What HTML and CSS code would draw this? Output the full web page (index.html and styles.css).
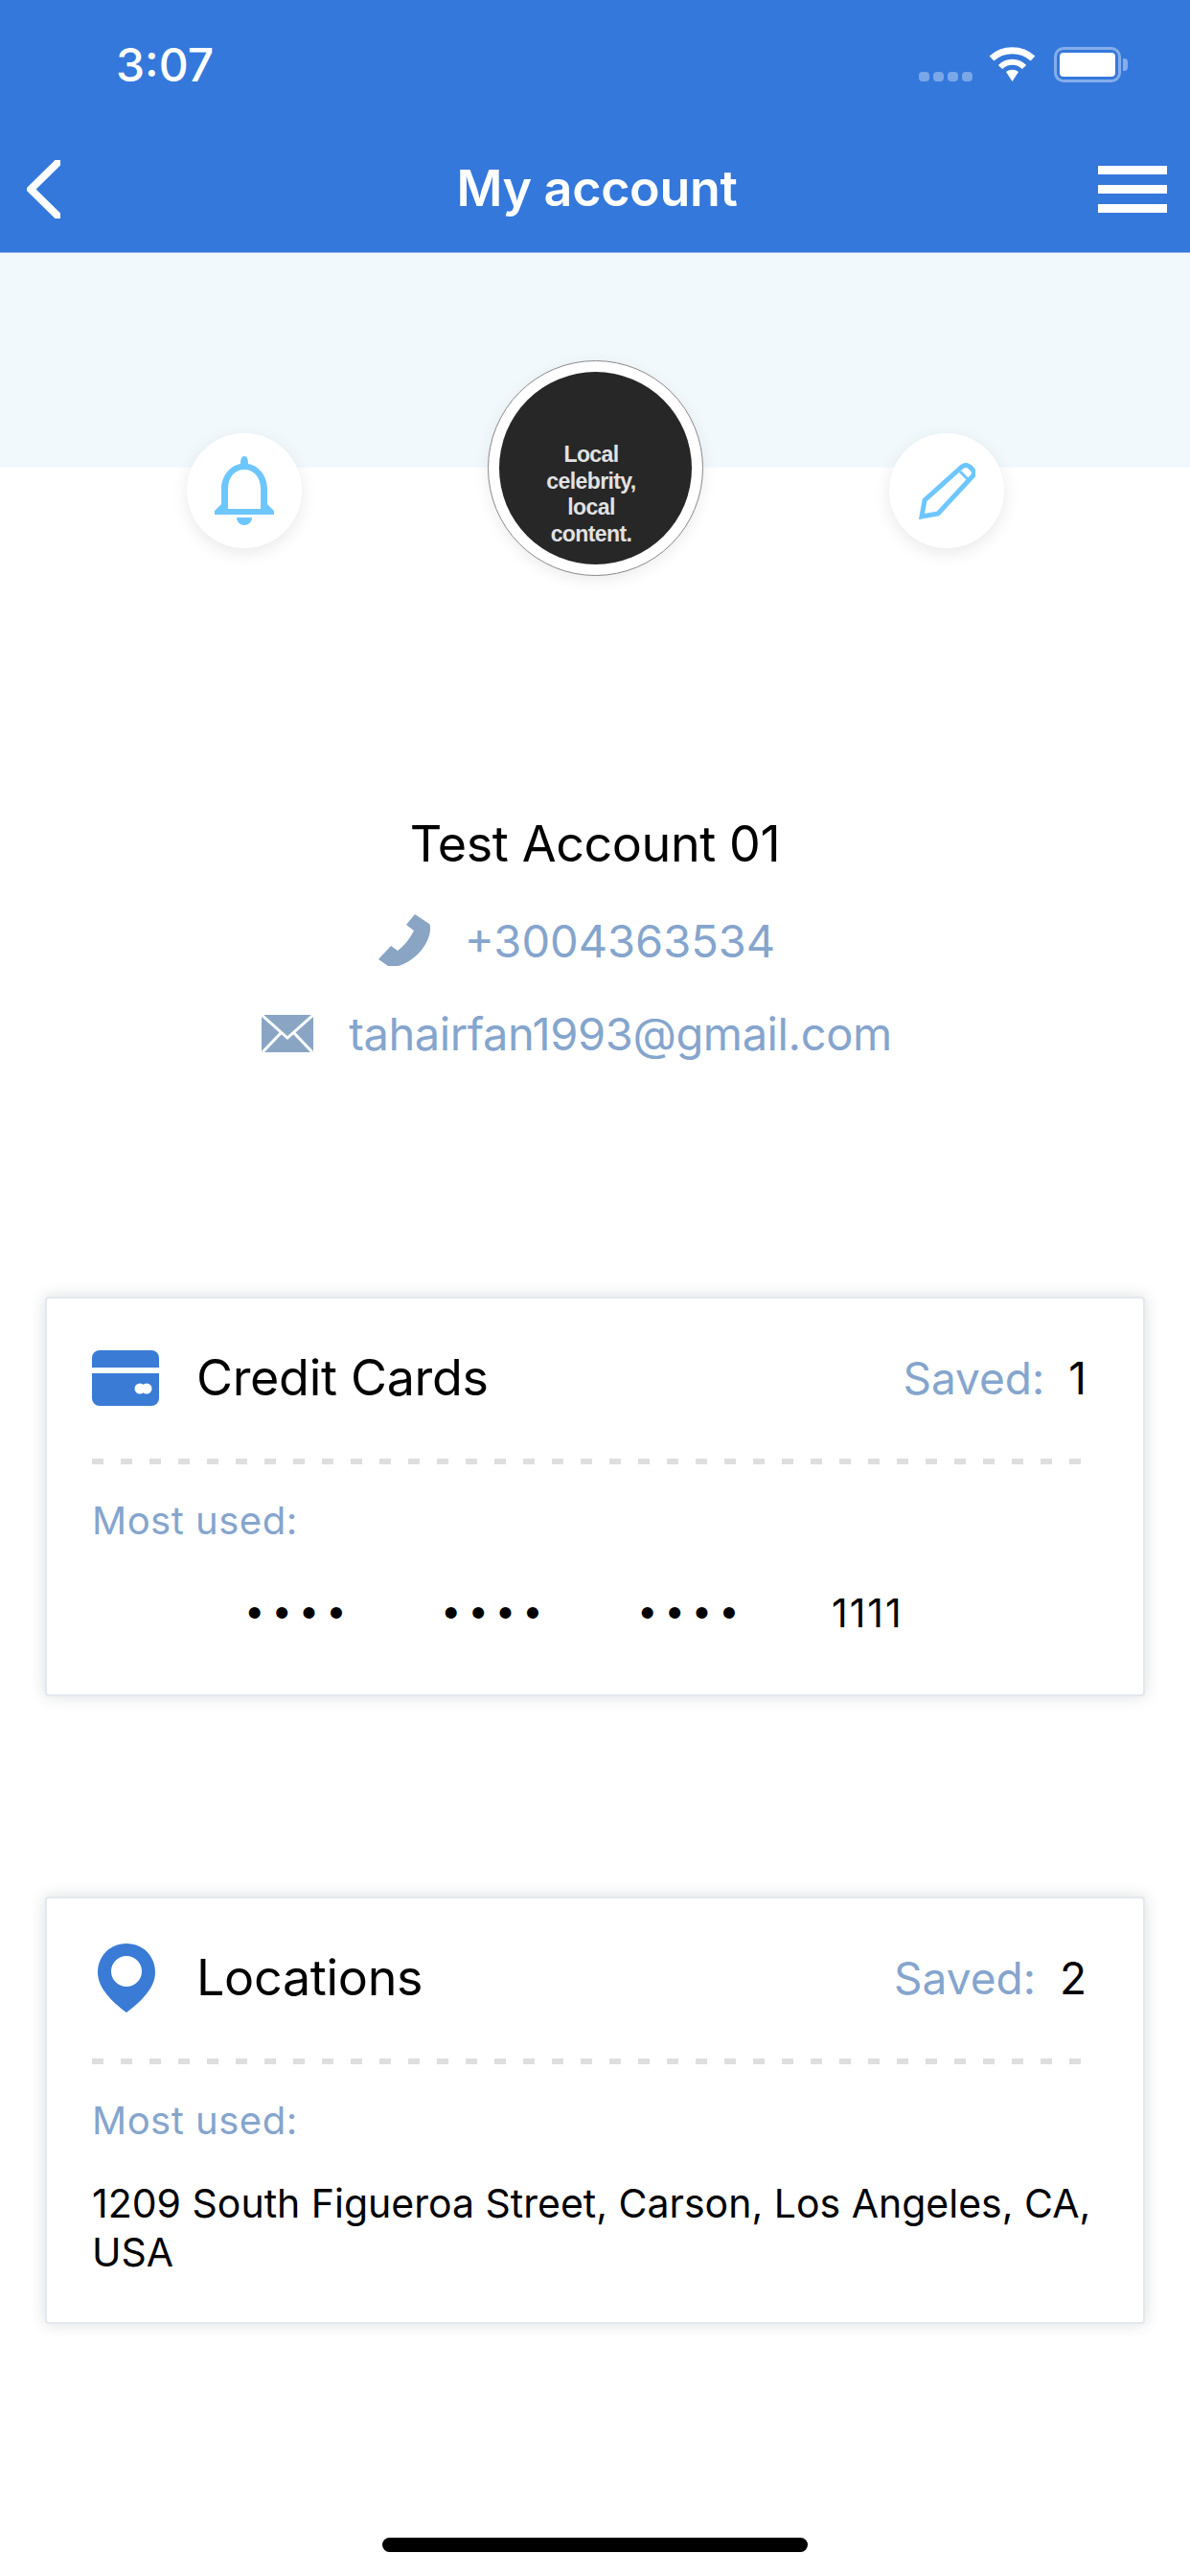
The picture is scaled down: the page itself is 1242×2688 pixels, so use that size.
FILE: index.html
```html
<!DOCTYPE html>
<html lang="en">
    <head>
        <meta charset="UTF-8" />
        <meta name="viewport" content="width=device-width, initial-scale=1.0" />
        <title>My account</title>
        <link rel="stylesheet" href="styles.css">
    </head>
    <body>
        <main class="screen">
            <header class="topbar">
                <div class="status">
                    <span class="status-time">3:07</span>
                    <div class="status-icons">
                        <div class="signal"><i></i><i></i><i></i><i></i></div>
                        <svg class="wifi" viewBox="0 0 49 36">
                            <path d="M3 12 C15 1 34 1 46 12" fill="none" stroke="#fff" stroke-width="7" />
                            <path d="M12 21 C19 14 30 14 37 21" fill="none" stroke="#fff" stroke-width="6" />
                            <path d="M18 26 C22 23 27 23 31 26 L24.500 36 Z" fill="#fff" />
                        </svg>
                        <div class="battery"><i></i></div>
                    </div>
                </div>
                <nav class="nav">
                    <svg class="nav-back" viewBox="0 0 35 61">
                        <path d="M32 3 L4 30.500 L32 58" fill="none" stroke="#fff" stroke-width="8" stroke-linecap="round" stroke-linejoin="round" />
                    </svg>
                    <h1 class="nav-title">My account</h1>
                    <div class="nav-menu"><i></i><i></i><i></i></div>
                </nav>
            </header>

            <div class="band"></div>

            <section class="actions">
                <button class="round-btn">
                    <svg class="icon-bell" viewBox="0 0 62 72">
                        <path fill-rule="evenodd" d="M31 0 C34 0 35 3 35 8 C47 10 55 22 55 34 V50 L62 57 V61 H0 V57 L7 50 V34 C7 22 15 10 27 8 C27 3 28 0 31 0 Z M14 55 H48 V34 C48 22 41 14 31 14 C21 14 14 22 14 34 Z" />
                        <path d="M23 64 H39 C39 69 35 72 31 72 C27 72 23 69 23 64 Z" />
                    </svg>
                </button>
                <div class="avatar">
                    <div class="avatar-img">Local<br>celebrity,<br>local<br>content.</div>
                </div>
                <button class="round-btn">
                    <svg class="icon-pencil" viewBox="0 0 60 59">
                        <path d="M46 4 Q50 1 54 4 L57 7 Q60 11 57 14 L21 53 L4 56 L7 39 Z" fill="none" stroke="#6ec6ff" stroke-width="5" />
                        <path d="M44 9 L53 18" fill="none" stroke="#6ec6ff" stroke-width="3" />
                    </svg>
                </button>
            </section>

            <section class="profile">
                <div class="profile-name">Test Account 01</div>
                <div class="profile-row profile-phone">
                    <svg class="icon-phone" viewBox="0 0 54 54">
                        <path d="M38 0 L53 10 C55 12 54 18 53 22 C50 33 40 46 26 52 C20 55 14 55 10 54 L0 47 L13 33 L20 38 C27 33 33 25 37 17 L29 11 Z" />
                    </svg>
                    <span>+3004363534</span>
                </div>
                <div class="profile-row profile-mail">
                    <svg class="icon-mail" viewBox="0 0 54 39">
                        <rect width="54" height="39" />
                        <path d="M0 0 L27 24 L54 0 M1 39 L20 19 M53 39 L34 19" fill="none" stroke="#fff" stroke-width="3" />
                    </svg>
                    <span>tahairfan1993@gmail.com</span>
                </div>
            </section>

            <section class="card card-first">
                <div class="card-head">
                    <svg class="icon-card" viewBox="0 0 70 58">
                        <rect width="70" height="58" rx="8" />
                        <rect class="cut" y="18" width="70" height="6" />
                        <circle class="cut" cx="50" cy="40" r="5.500" />
                        <circle class="cut" cx="57" cy="40" r="5.500" />
                    </svg>
                    <h2 class="card-title">Credit Cards</h2>
                    <span class="saved">Saved:</span>
                    <span class="saved-count">1</span>
                </div>
                <div class="dashes"></div>
                <div class="card-label">Most used:</div>
                <div class="card-number">
                    <span class="dots">••••</span>
                    <span class="dots">••••</span>
                    <span class="dots">••••</span>
                    <span class="last4">1111</span>
                </div>
            </section>

            <section class="card card-second">
                <div class="card-head">
                    <svg class="icon-pin" viewBox="0 0 60 72">
                        <path fill-rule="evenodd" d="M30 0 C47 0 60 13 60 30 C60 46 46 60 30 72 C14 60 0 46 0 30 C0 13 13 0 30 0 Z M30 13 A16 16 0 1 0 30 45 A16 16 0 1 0 30 13 Z" />
                    </svg>
                    <h2 class="card-title">Locations</h2>
                    <span class="saved">Saved:</span>
                    <span class="saved-count">2</span>
                </div>
                <div class="dashes"></div>
                <div class="card-label">Most used:</div>
                <p class="card-address">1209 South Figueroa Street, Carson, Los Angeles, CA, USA</p>
            </section>

            <div class="home-bar"></div>
        </main>
    </body>
</html>
```

FILE: styles.css
```css
* {
    margin: 0;
    box-sizing: border-box;
}

body {
    margin: 0;
    background: #fff;
    font-family: Inter, Roboto, sans-serif;
    color: #000;
}

.screen {
    display: flex;
    flex-direction: column;
    width: 1242px;
    height: 2688px;
    overflow: hidden;
}

/* top bar */
.topbar {
    height: 264px;
    padding-bottom: 5px;
    background: #3478dc;
    border-bottom: 1px solid #8fb0de;
}

.status {
    display: flex;
    justify-content: space-between;
    height: 136px;
    padding: 44px 72px 0 121px;
}

.status-time {
    color: #fff;
    font-size: 48px;
    font-weight: 500;
    line-height: 48px;
}

.status-icons {
    display: flex;
    align-items: flex-start;
    padding-top: 5px;
}

.signal {
    display: flex;
    gap: 4px;
    margin: 26px 17px 0 0;
}

.signal i {
    width: 11px;
    height: 10px;
    border-radius: 4px;
    background: rgba(255, 255, 255, 0.35);
}

.wifi {
    width: 49px;
    height: 36px;
    margin-right: 19px;
}

.battery {
    position: relative;
    width: 70px;
    height: 37px;
    padding: 3px;
    border: 3px solid rgba(255, 255, 255, 0.4);
    border-radius: 10px;
}

.battery::after {
    content: "";
    position: absolute;
    top: 9px;
    right: -10px;
    width: 5px;
    height: 13px;
    border-radius: 0 4px 4px 0;
    background: rgba(255, 255, 255, 0.4);
}

.battery i {
    display: block;
    height: 100%;
    border-radius: 4px;
    background: #fff;
}

.nav {
    display: grid;
    grid-template-columns: 1fr auto 1fr;
    align-items: center;
    height: 122px;
    padding: 0 24px 0 28px;
}

.nav-back {
    width: 35px;
    height: 61px;
}

.nav-title {
    color: #fff;
    font-size: 52px;
    font-weight: 600;
    line-height: 60px;
    letter-spacing: -0.3px;
}

.nav-menu {
    display: flex;
    flex-direction: column;
    gap: 11px;
    justify-self: end;
    width: 72px;
}

.nav-menu i {
    height: 9px;
    background: #fff;
}

/* avatar area */
.band {
    height: 224px;
    background: #f1f9fd;
}

.actions {
    display: flex;
    justify-content: center;
    gap: 194px;
    position: relative;
    margin-top: -112px;
}

.round-btn {
    display: flex;
    align-items: center;
    justify-content: center;
    width: 120px;
    height: 120px;
    margin-top: 76px;
    padding: 0;
    border: 0;
    border-radius: 50%;
    background: #fff;
    box-shadow: 0 5px 18px rgba(0, 0, 0, 0.09);
}

.icon-bell {
    width: 62px;
    height: 72px;
    fill: #6ec6ff;
}

.icon-pencil {
    width: 60px;
    height: 59px;
}

.avatar {
    width: 225px;
    height: 225px;
    padding: 11px;
    border: 1px solid #8a8a8a;
    border-radius: 50%;
    background: #fff;
    box-shadow: 0 4px 16px rgba(0, 0, 0, 0.08);
}

.avatar-img {
    width: 201px;
    height: 201px;
    padding: 73px 8px 0 0;
    border-radius: 50%;
    background: #272727;
    color: #e2e2e2;
    font-family: "Liberation Sans", sans-serif;
    font-size: 23px;
    font-weight: 700;
    letter-spacing: -0.6px;
    line-height: 27.500px;
    text-align: center;
    overflow: hidden;
}

/* name and contacts */
.profile {
    display: flex;
    flex-direction: column;
    align-items: center;
    margin-top: 250px;
}

.profile-name {
    font-size: 52px;
    line-height: 60px;
    letter-spacing: -0.4px;
}

.profile-row {
    display: flex;
    align-items: center;
    height: 60px;
    margin-right: 38px;
    color: #85a5cd;
    font-size: 47px;
}

.profile-phone {
    gap: 36px;
    margin-top: 40px;
}

.profile-mail {
    gap: 37px;
    margin-top: 37px;
    letter-spacing: -0.4px;
}

.icon-phone {
    width: 54px;
    height: 54px;
    fill: #89a5c3;
}

.icon-mail {
    width: 54px;
    height: 39px;
    fill: #89a5c3;
}

/* cards */
.card {
    margin: 0 47px;
    padding: 48px 48px 0 47px;
    border: 2px solid #e3e8ee;
    border-radius: 4px;
    background: #fff;
    box-shadow: 0 0 16px rgba(50, 60, 70, 0.18);
}

.card-first {
    height: 417px;
    margin-top: 245px;
}

.card-second {
    height: 446px;
    margin-top: 209px;
}

.card-head {
    display: flex;
    align-items: center;
    height: 70px;
    margin-right: 11px;
}

.icon-card {
    width: 70px;
    height: 58px;
    fill: #3a7bd5;
}

.icon-card .cut {
    fill: #fff;
}

.icon-pin {
    width: 60px;
    height: 72px;
    margin: 0 4px 0 6px;
    fill: #3a7bd5;
}

.card-title {
    flex: 1;
    margin-left: 39px;
    font-size: 52px;
    font-weight: 400;
    line-height: 60px;
    letter-spacing: -0.3px;
}

.saved {
    color: #85a5cd;
    font-size: 46px;
}

.saved-count {
    margin-left: 25px;
    font-size: 46px;
}

.dashes {
    height: 6px;
    margin: 49px 17px 0 0;
    background: repeating-linear-gradient(90deg, #dedede 0 12px, transparent 12px 30px);
}

.card-label {
    margin-top: 34px;
    color: #85a5cd;
    font-size: 40px;
    line-height: 50px;
    letter-spacing: 0.5px;
}

.card-number {
    display: flex;
    align-items: center;
    height: 50px;
    margin: 46px 0 0 162px;
}

.dots {
    width: 205px;
    font-family: "Liberation Sans", sans-serif;
    font-size: 44px;
    letter-spacing: 13px;
}

.last4 {
    margin-left: -5px;
    font-size: 41px;
    letter-spacing: 2px;
}

.card-address {
    margin-top: 36px;
    margin-right: -6px;
    font-size: 41px;
    line-height: 51px;
}

.home-bar {
    width: 444px;
    height: 15px;
    margin: 223px auto 0;
    border-radius: 8px;
    background: #000;
}
```
